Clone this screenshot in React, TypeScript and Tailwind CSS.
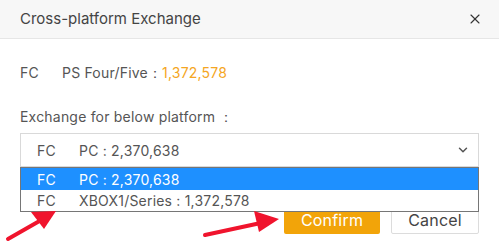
import { ChevronDown, X } from 'lucide-react';

export default function App() {
  return (
    <div
      className="relative w-[499px] h-[247px] bg-white overflow-hidden text-[#555]"
      style={{ fontFamily: 'Inter, "Noto Sans", sans-serif' }}
    >
      {/* Header */}
      <div className="h-[39px] bg-[#f7f7f7] border-b border-[#e6e6e6] flex items-center justify-between pl-5 pr-[16px]">
        <span className="text-[15px] text-[#444]">Cross-platform Exchange</span>
        <X className="w-[16px] h-[16px] text-[#333]" strokeWidth={1.6} />
      </div>

      {/* Body */}
      <div className="px-5 tracking-[0.2px]">
        <div className="h-[22px] mt-[22px] flex items-center text-[14px]">
          <span className="w-[42px]">FC</span>
          <span>PS Four/Five：</span>
          <span className="text-[#f5a623]">1,372,578</span>
        </div>

        <div className="h-[22px] mt-[22px] flex items-center text-[14px]">
          Exchange for below platform ：
        </div>

        <div className="relative mt-[6px]">
          <div className="h-[34px] border border-[#d9d9d9] flex items-center pl-[16px] pr-[8px] text-[14px]">
            <span className="w-[42px]">FC</span>
            <span className="flex-1">PC : 2,370,638</span>
            <ChevronDown className="w-[14px] h-[14px] text-[#555]" strokeWidth={2.5} />
          </div>

          {/* Open dropdown list */}
          <div className="absolute left-0 right-0 top-[34px] border border-[#767676] bg-white text-[14px] z-10">
            <div className="h-[22px] bg-[#1e90ff] text-white flex items-center pl-[16px]">
              <span className="w-[42px]">FC</span>
              <span>PC : 2,370,638</span>
            </div>
            <div className="h-[21px] flex items-center pl-[16px] text-[#555]">
              <span className="w-[42px]">FC</span>
              <span>XBOX1/Series : 1,372,578</span>
            </div>
          </div>
        </div>

        <div className="flex justify-end gap-[11px] mt-[39px]">
          <button className="w-[96px] h-[28px] rounded-[2px] bg-[#f2a409] text-white text-[16px]">
            Confirm
          </button>
          <button className="w-[88px] h-[28px] rounded-[2px] bg-white border border-[#dcdcdc] text-[#444] text-[16px]">
            Cancel
          </button>
        </div>
      </div>

      {/* Red annotation arrows */}
      <svg className="absolute inset-0 pointer-events-none z-20" width="499" height="247">
        <g stroke="#f0142d" strokeWidth="4" strokeLinecap="round" fill="#f0142d">
          <line x1="8" y1="239" x2="50" y2="215" />
          <polygon points="56,211 31,212 44,229" stroke="none" />
          <line x1="205" y1="235" x2="270" y2="221" />
          <polygon points="279,219 254,211 259,232" stroke="none" />
        </g>
      </svg>
    </div>
  );
}
